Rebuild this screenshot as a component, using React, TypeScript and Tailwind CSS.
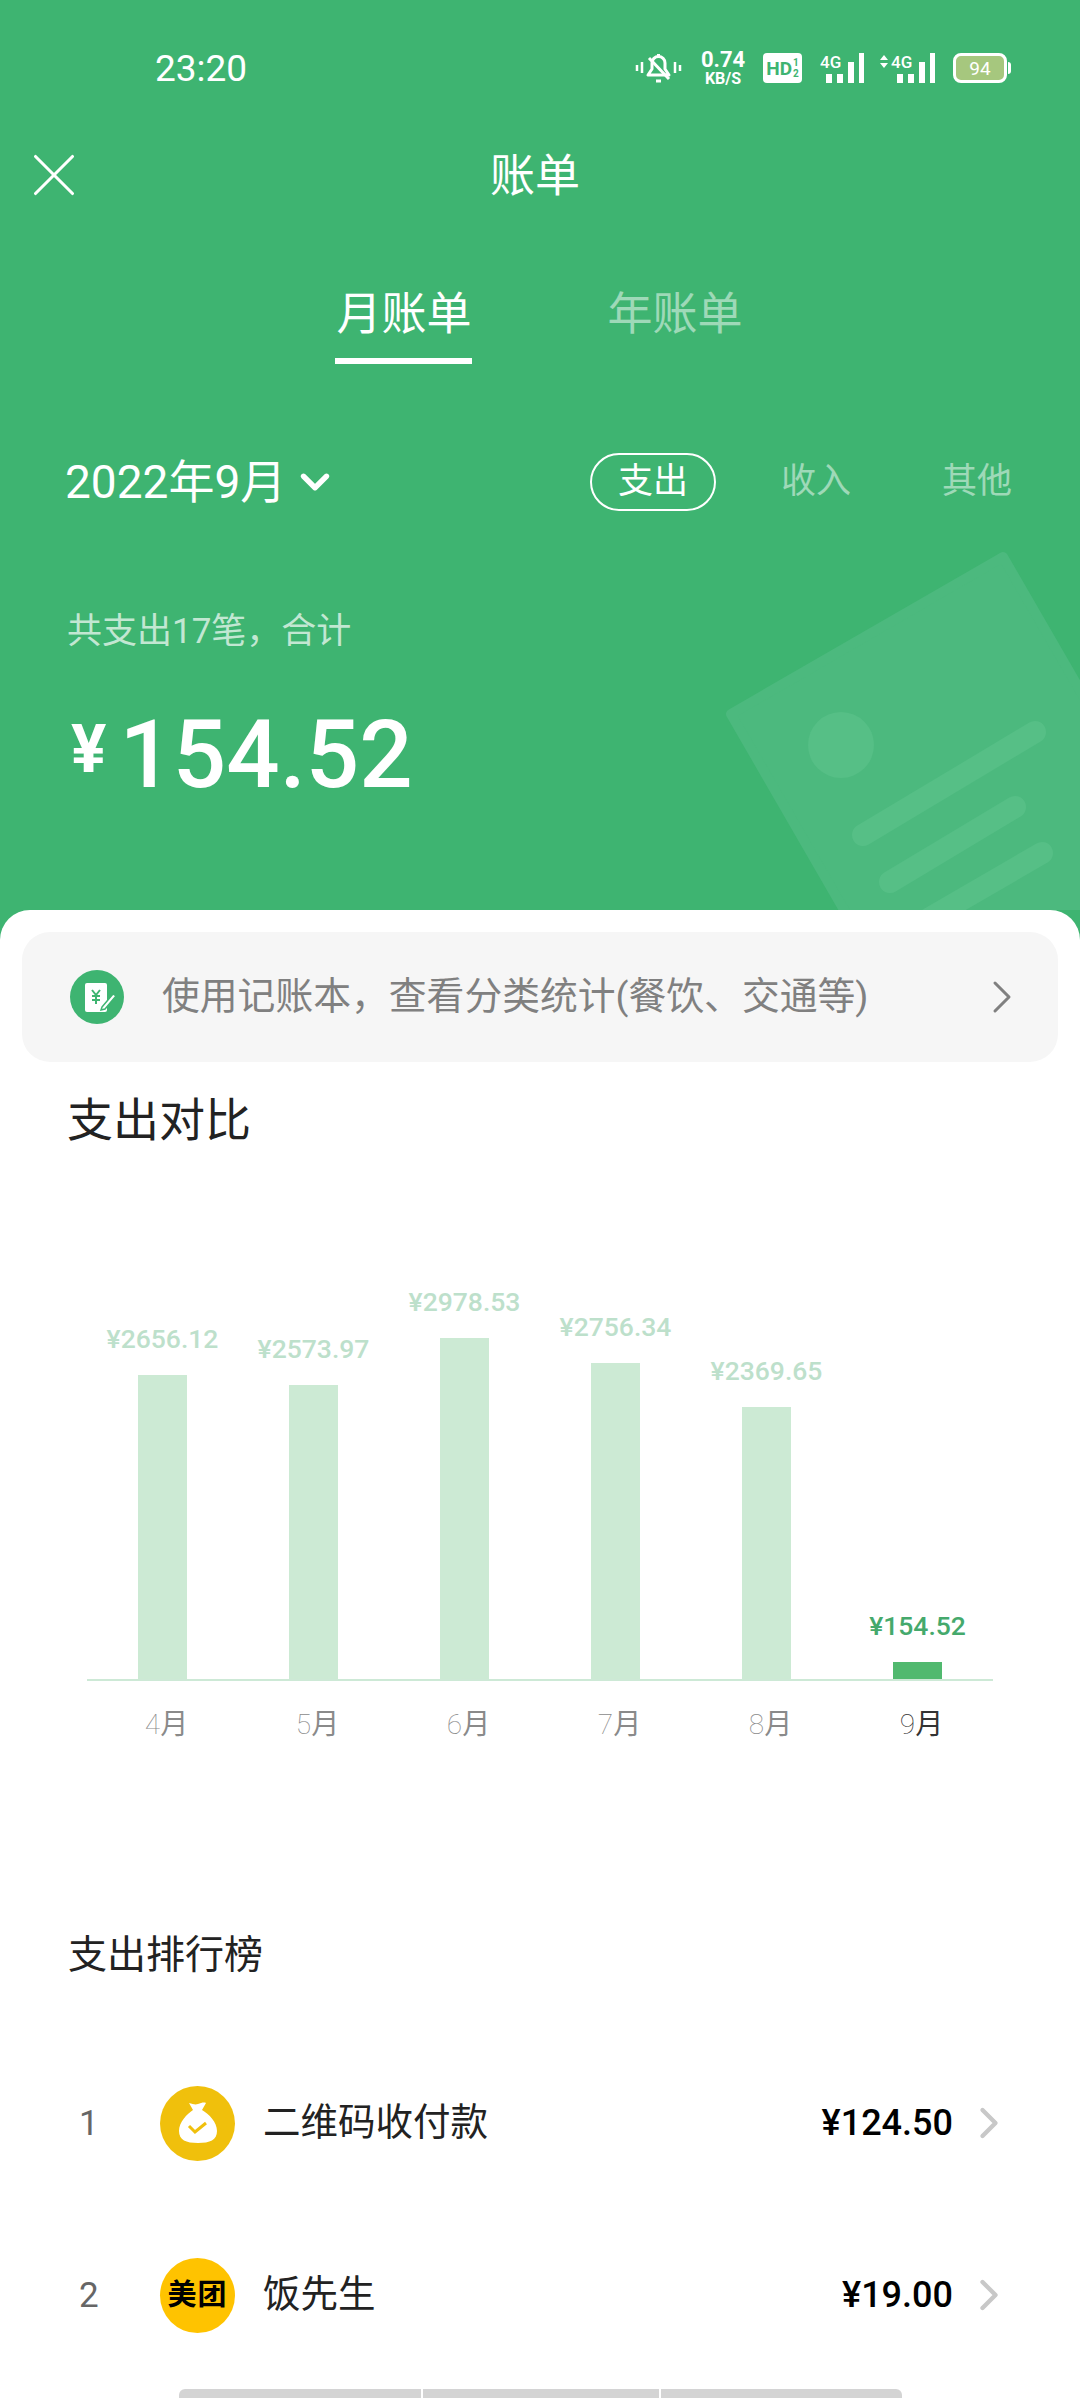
import { ChevronDown, ChevronRight, X } from 'lucide-react';

const months = [
  { digit: '4', amount: '¥2656.12', height: 304 },
  { digit: '5', amount: '¥2573.97', height: 294 },
  { digit: '6', amount: '¥2978.53', height: 341 },
  { digit: '7', amount: '¥2756.34', height: 316 },
  { digit: '8', amount: '¥2369.65', height: 272 },
  { digit: '9', amount: '¥154.52', height: 17, active: true },
];

const Signal = ({ arrows }: { arrows?: boolean }) => (
  <svg width={arrows ? 57 : 44} height="30" viewBox={arrows ? '-13 0 57 30' : '0 0 44 30'} fill="#fff">
    {arrows && <path d="M-11 7l4-5 4 5zM-11 10l4 5 4-5z" />}
    <text x="0" y="15" fontSize="17" fontWeight="500" fontFamily="Roboto, sans-serif">4G</text>
    <rect x="6" y="21" width="6" height="9" />
    <rect x="17" y="21" width="6" height="9" />
    <rect x="28" y="9" width="6" height="21" />
    <rect x="39" y="0" width="5" height="30" />
  </svg>
);

const StatusBar = () => (
  <div className="flex h-[136px] items-center pl-[155px] pr-[69px] text-white">
    <span className="text-[37px] leading-none">23:20</span>
    <div className="ml-auto flex items-center">
      <svg width="47" height="32" viewBox="0 0 47 32" fill="none" stroke="#fff" strokeWidth="3">
        <path d="M2 13v6M7 10v11M40 10v11M45 13v6" strokeWidth="2.5" />
        <path d="M13 23h21l-4-6v-6a6.5 6.5 0 0 0-13 0v6zM21 29h5M23.500 2v2" strokeLinejoin="round" />
        <path d="M14 6l20 21" />
      </svg>
      <div className="ml-[17px] flex w-[48px] flex-col items-center font-bold">
        <span className="text-[22px] leading-[22px]">0.74</span>
        <span className="text-[16px] leading-[16px]">KB/S</span>
      </div>
      <div className="ml-[16px] flex h-[30px] w-[39px] items-center justify-center gap-[1px] rounded-[4px] bg-white font-bold text-[#3eb471]">
        <span className="text-[19px] leading-none">HD</span>
        <span className="flex flex-col text-[10px] leading-[11px]">
          <span>1</span>
          <span>2</span>
        </span>
      </div>
      <div className="ml-[18px] flex">
        <Signal />
      </div>
      <div className="ml-[14px] flex">
        <Signal arrows />
      </div>
      <div className="ml-[18px] flex items-center">
        <div className="flex h-[30px] w-[54px] items-center justify-center rounded-[8px] border-[3px] border-white bg-[#a6c77e] text-[19px] leading-none">
          94
        </div>
        <div className="ml-[1px] h-[12px] w-[3px] rounded-r-full bg-white" />
      </div>
    </div>
  </div>
);

const Header = () => (
  <div className="relative h-[910px] shrink-0 overflow-hidden text-white">
    <svg className="absolute left-[700px] top-[540px]" width="380" height="370" viewBox="700 540 380 370">
      <path d="M731 714L1003 557L1253 990L981 1147Z" fill="#4cb97e" stroke="#4cb97e" strokeWidth="10" strokeLinejoin="round" />
      <circle cx="841" cy="745" r="33" fill="#56bf86" />
      <path d="M863 835L1035 732M890 882L1015 807M930 918L1042 853" stroke="#56bf86" strokeWidth="22" strokeLinecap="round" />
    </svg>
    <div className="relative">
      <StatusBar />
      <div className="relative flex h-[80px] items-center justify-center pr-[10px]">
        <X className="absolute left-[17px] top-[2px] size-[74px]" strokeWidth={1} />
        <span className="text-[45px] leading-none">账单</span>
      </div>
      <div className="flex justify-center gap-[135px] pr-[2px] pt-[69px]">
        <div className="flex flex-col items-center">
          <span className="text-[45px] leading-[60px]">月账单</span>
          <div className="mt-[13px] h-[6px] w-[137px] bg-white" />
        </div>
        <span className="text-[45px] leading-[60px] text-white/50">年账单</span>
      </div>
      <div className="mt-[89px] flex h-[58px] items-center pl-[65px] pr-[68px]">
        <span className="text-[46px] leading-none">2022年9月</span>
        <ChevronDown className="ml-[6px] size-[46px]" strokeWidth={2.8} />
        <div className="ml-auto flex h-[58px] w-[126px] items-center justify-center rounded-full border-2 border-white text-[35px]">
          支出
        </div>
        <span className="ml-[65px] text-[35px] text-white/50">收入</span>
        <span className="ml-[91px] text-[35px] text-white/50">其他</span>
      </div>
      <p className="mt-[99px] pl-[67px] text-[35px] leading-[44px] text-white/70">{'共支出17笔\uFF0C合计'}</p>
      <div className="mt-[51px] flex items-start pl-[71px]">
        <span className="mt-[12px] text-[66px] font-bold leading-none">¥</span>
        <span className="ml-[13px] text-[94px] font-medium leading-[100px]">154.52</span>
      </div>
    </div>
  </div>
);

const Banner = () => (
  <div className="mx-[22px] mt-[22px] flex h-[130px] items-center rounded-[28px] bg-[#f6f6f6] pl-[48px] pr-[28px]">
    <svg width="54" height="54" viewBox="0 0 54 54" className="shrink-0">
      <circle cx="27" cy="27" r="27" fill="#3eb471" />
      <rect x="15" y="13" width="22" height="29" rx="2" fill="#fff" />
      <path d="M22 20l4 5 4-5M26 25v9M22 26h8M22 30h8" stroke="#3eb471" strokeWidth="2" fill="none" />
      <path d="M32 37l11-13 3 2-11 13-4 1z" fill="#fff" stroke="#3eb471" strokeWidth="1.5" />
    </svg>
    <span className="ml-[38px] text-[37.8px] leading-none text-[#808080]">{'使用记账本\uFF0C查看分类统计(餐饮、交通等)'}</span>
    <ChevronRight className="ml-auto size-[56px] text-[#808080]" strokeWidth={1.3} />
  </div>
);

const Chart = () => (
  <div className="mx-[87px]">
    <div className="grid h-[531px] grid-cols-6 border-b-2 border-[#cde9d6]">
      {months.map((m) => (
        <div key={m.digit} className="flex flex-col items-center justify-end">
          <span
            className={
              m.active
                ? 'text-[26.5px] font-medium leading-[36px] text-[#45a96c]'
                : 'text-[26.5px] font-medium leading-[36px] text-[#bde0cb]'
            }
          >
            {m.amount}
          </span>
          <div
            className={m.active ? 'mt-[18px] w-[49px] bg-[#51b96f]' : 'mt-[18px] w-[49px] bg-[#cceAD4]'}
            style={{ height: m.height }}
          />
        </div>
      ))}
    </div>
    <div className="mt-[26px] grid grid-cols-6">
      {months.map((m) => (
        <span
          key={m.digit}
          className={
            m.active
              ? 'pl-[8px] text-center text-[28px] leading-[36px] text-[#333333]'
              : 'pl-[8px] text-center text-[28px] leading-[36px] text-[#8a8a8a]'
          }
        >
          <span className="font-thin">{m.digit}</span>月
        </span>
      ))}
    </div>
  </div>
);

const BagIcon = () => (
  <svg width="75" height="75" viewBox="0 0 75 75" className="shrink-0">
    <circle cx="37.5" cy="37.5" r="37.5" fill="#f0c00c" />
    <path
      d="M29 17c4 1 6 2 9 1 3-1 6-2 8-1l-4 7c7 4 15 12 15 21 0 9-7 12-19 12s-19-3-19-12c0-9 8-17 14-21z"
      fill="#fff"
    />
    <path d="M29 40l6 6 11-9" fill="none" stroke="#f0c00c" strokeWidth="3" />
  </svg>
);

const MeituanIcon = () => (
  <div className="flex size-[75px] shrink-0 items-center justify-center rounded-full bg-[#ffc300] text-[29px] font-bold leading-none tracking-[1px] text-black">
    美团
  </div>
);

const Row = ({ rank, icon, name, amount }: { rank: string; icon: React.ReactNode; name: string; amount: string }) => (
  <div className="flex h-[172px] items-center pl-[79px] pr-[65px]">
    <span className="w-[81px] text-[35px] leading-none text-[#666666]">{rank}</span>
    {icon}
    <span className="ml-[28px] text-[37.5px] leading-none text-[#222222]">{name}</span>
    <span className="ml-auto text-[36px] font-medium leading-none text-black">{amount}</span>
    <ChevronRight className="ml-[10px] size-[52px] text-[#c8c8c8]" strokeWidth={2} />
  </div>
);

export default function App() {
  return (
    <div className="flex h-[2400px] w-[1080px] flex-col overflow-hidden bg-[#3eb471] font-['Roboto','Noto_Sans_CJK_SC',sans-serif]">
      <Header />
      <div className="flex flex-1 flex-col rounded-t-[30px] bg-white">
        <Banner />
        <h2 className="mt-[28px] pl-[67px] text-[46px] font-normal leading-[60px] text-[#222222]">支出对比</h2>
        <Chart />
        <h2 className="mt-[184px] pl-[68px] text-[39px] font-normal leading-[56px] text-[#222222]">支出排行榜</h2>
        <div className="mt-[54px]">
          <Row rank="1" icon={<BagIcon />} name="二维码收付款" amount="¥124.50" />
          <Row rank="2" icon={<MeituanIcon />} name="饭先生" amount="¥19.00" />
        </div>
        <div className="mx-auto mt-[8px] flex h-[9px] w-[723px] gap-[2px]">
          <div className="flex-[242] rounded-tl-[6px] bg-[#d4d4d4]" />
          <div className="flex-[236] bg-[#d4d4d4]" />
          <div className="flex-[241] rounded-tr-[6px] bg-[#d4d4d4]" />
        </div>
      </div>
    </div>
  );
}
